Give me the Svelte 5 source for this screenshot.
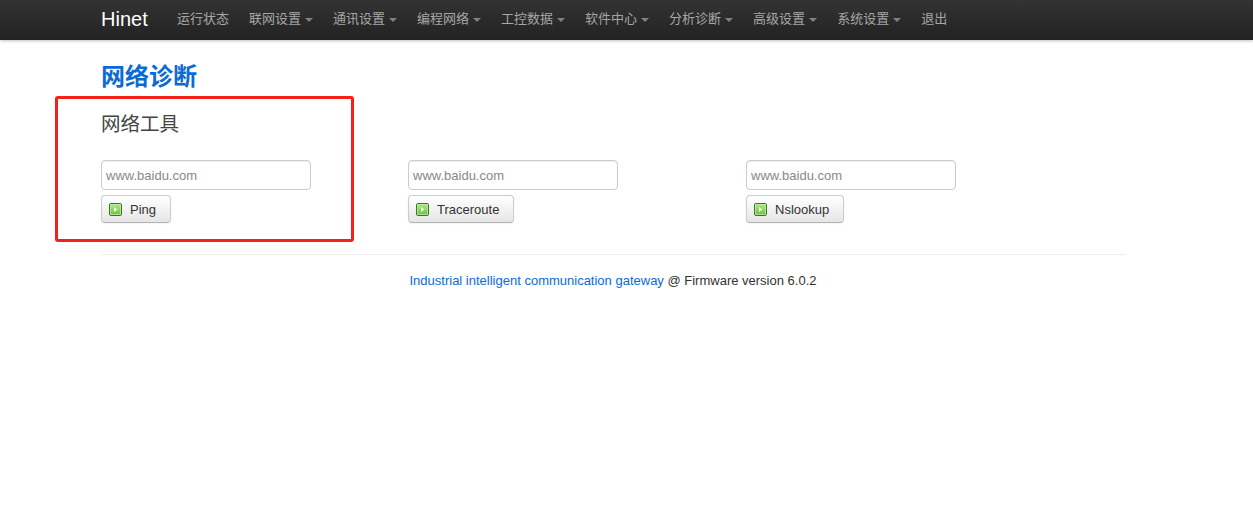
<script>
  const menus = [
    { label: '运行状态', caret: false },
    { label: '联网设置', caret: true },
    { label: '通讯设置', caret: true },
    { label: '编程网络', caret: true },
    { label: '工控数据', caret: true },
    { label: '软件中心', caret: true },
    { label: '分析诊断', caret: true },
    { label: '高级设置', caret: true },
    { label: '系统设置', caret: true },
    { label: '退出', caret: false }
  ];
  const tools = [
    { name: 'Ping', width: 307 },
    { name: 'Traceroute', width: 338 },
    { name: 'Nslookup', width: 300 }
  ];
</script>

<header class="navbar">
  <a class="brand" href="#top">Hinet</a>
  <nav class="menu">
    {#each menus as m}
      <a class="item" href="#top">{m.label}{#if m.caret}<span class="caret"></span>{/if}</a>
    {/each}
  </nav>
</header>

<main class="page">
  <h2 class="title">网络诊断</h2>
  <h3 class="subtitle">网络工具</h3>
  <div class="tools">
    {#each tools as t}
      <div class="tool" style="width: {t.width}px">
        <input class="field" type="text" placeholder="www.baidu.com" />
        <button class="btn" type="button">
          <svg class="icon" width="13" height="13" viewBox="0 0 13 13" aria-hidden="true">
            <defs>
              <linearGradient id="g-{t.name}" x1="0" y1="0" x2="0" y2="1">
                <stop offset="0" stop-color="#b4e884" />
                <stop offset="1" stop-color="#6cc040" />
              </linearGradient>
            </defs>
            <rect x="0.5" y="0.5" width="12" height="12" rx="1.5" fill="url(#g-{t.name})" stroke="#2f7a22" />
            <rect x="1.5" y="1.5" width="10" height="10" fill="none" stroke="#c9efa8" stroke-opacity="0.7" />
            <path d="M5 4 L8.5 6.5 L5 9 Z" fill="#f8fdf0" />
          </svg>
          <span>{t.name}</span>
        </button>
      </div>
    {/each}
  </div>
  <hr class="rule" />
  <footer class="foot">
    <a href="#top">Industrial intelligent communication gateway</a> @ Firmware version 6.0.2
  </footer>
</main>

<div class="annotation"></div>

<style>
  :global(body) {
    margin: 0;
    background: #fff;
    font-family: "Liberation Sans", "Noto Sans CJK SC", sans-serif;
    font-size: 13px;
    color: #333;
  }
  .navbar {
    height: 40px;
    box-sizing: border-box;
    padding-left: 101px;
    padding-bottom: 2px;
    display: flex;
    align-items: center;
    background: linear-gradient(to bottom, #333333, #222222);
    box-shadow: 0 1px 3px rgba(0, 0, 0, 0.25);
  }
  .brand {
    color: #fff;
    font-size: 20px;
    line-height: 20px;
    text-decoration: none;
    width: 66px;
  }
  .menu {
    display: flex;
  }
  .item {
    display: flex;
    align-items: center;
    padding: 0 10px;
    font-size: 13px;
    line-height: 38px;
    color: #a6a6a6;
    text-decoration: none;
  }
  .caret {
    width: 0;
    height: 0;
    margin-left: 4px;
    margin-top: 1px;
    border-top: 4px solid #808080;
    border-left: 4px solid transparent;
    border-right: 4px solid transparent;
  }
  .page {
    width: 1024px;
    margin-left: 101px;
  }
  .title {
    margin: 19px 0 0;
    font-size: 24px;
    line-height: 36px;
    font-weight: 700;
    color: #0b6bd6;
  }
  .subtitle {
    margin: 14px 0 0;
    font-size: 19.5px;
    line-height: 30px;
    font-weight: 400;
    color: #444;
  }
  .tools {
    display: flex;
    margin-top: 21px;
  }
  .tool {
    display: flex;
    flex-direction: column;
    align-items: flex-start;
    gap: 5px;
  }
  .field {
    width: 210px;
    height: 30px;
    box-sizing: border-box;
    padding: 4px;
    border: 1px solid #ccc;
    border-radius: 4px;
    font-family: inherit;
    font-size: 13px;
    color: #555;
    box-shadow: inset 0 1px 1px rgba(0, 0, 0, 0.075);
    outline: none;
  }
  .field::placeholder {
    color: #888;
    opacity: 1;
  }
  .btn {
    display: flex;
    align-items: center;
    height: 28px;
    box-sizing: border-box;
    padding: 0 14px 0 7px;
    gap: 8px;
    border: 1px solid #ccc;
    border-bottom-color: #b3b3b3;
    border-radius: 4px;
    background: linear-gradient(to bottom, #ffffff, #e6e6e6);
    box-shadow: inset 0 1px 0 rgba(255, 255, 255, 0.2), 0 1px 2px rgba(0, 0, 0, 0.05);
    font-family: inherit;
    font-size: 13px;
    color: #333;
  }
  .icon {
    display: block;
    flex: none;
  }
  .rule {
    margin: 31px 0 0;
    border: 0;
    border-top: 1px solid #eee;
  }
  .foot {
    margin-top: 16px;
    text-align: center;
    font-size: 13px;
    line-height: 20px;
  }
  .foot a {
    color: #0b6bd6;
    text-decoration: none;
  }
  .annotation {
    position: absolute;
    left: 55px;
    top: 96px;
    width: 299px;
    height: 146px;
    box-sizing: border-box;
    border: 3px solid #f5201a;
    border-radius: 3px;
  }
</style>
